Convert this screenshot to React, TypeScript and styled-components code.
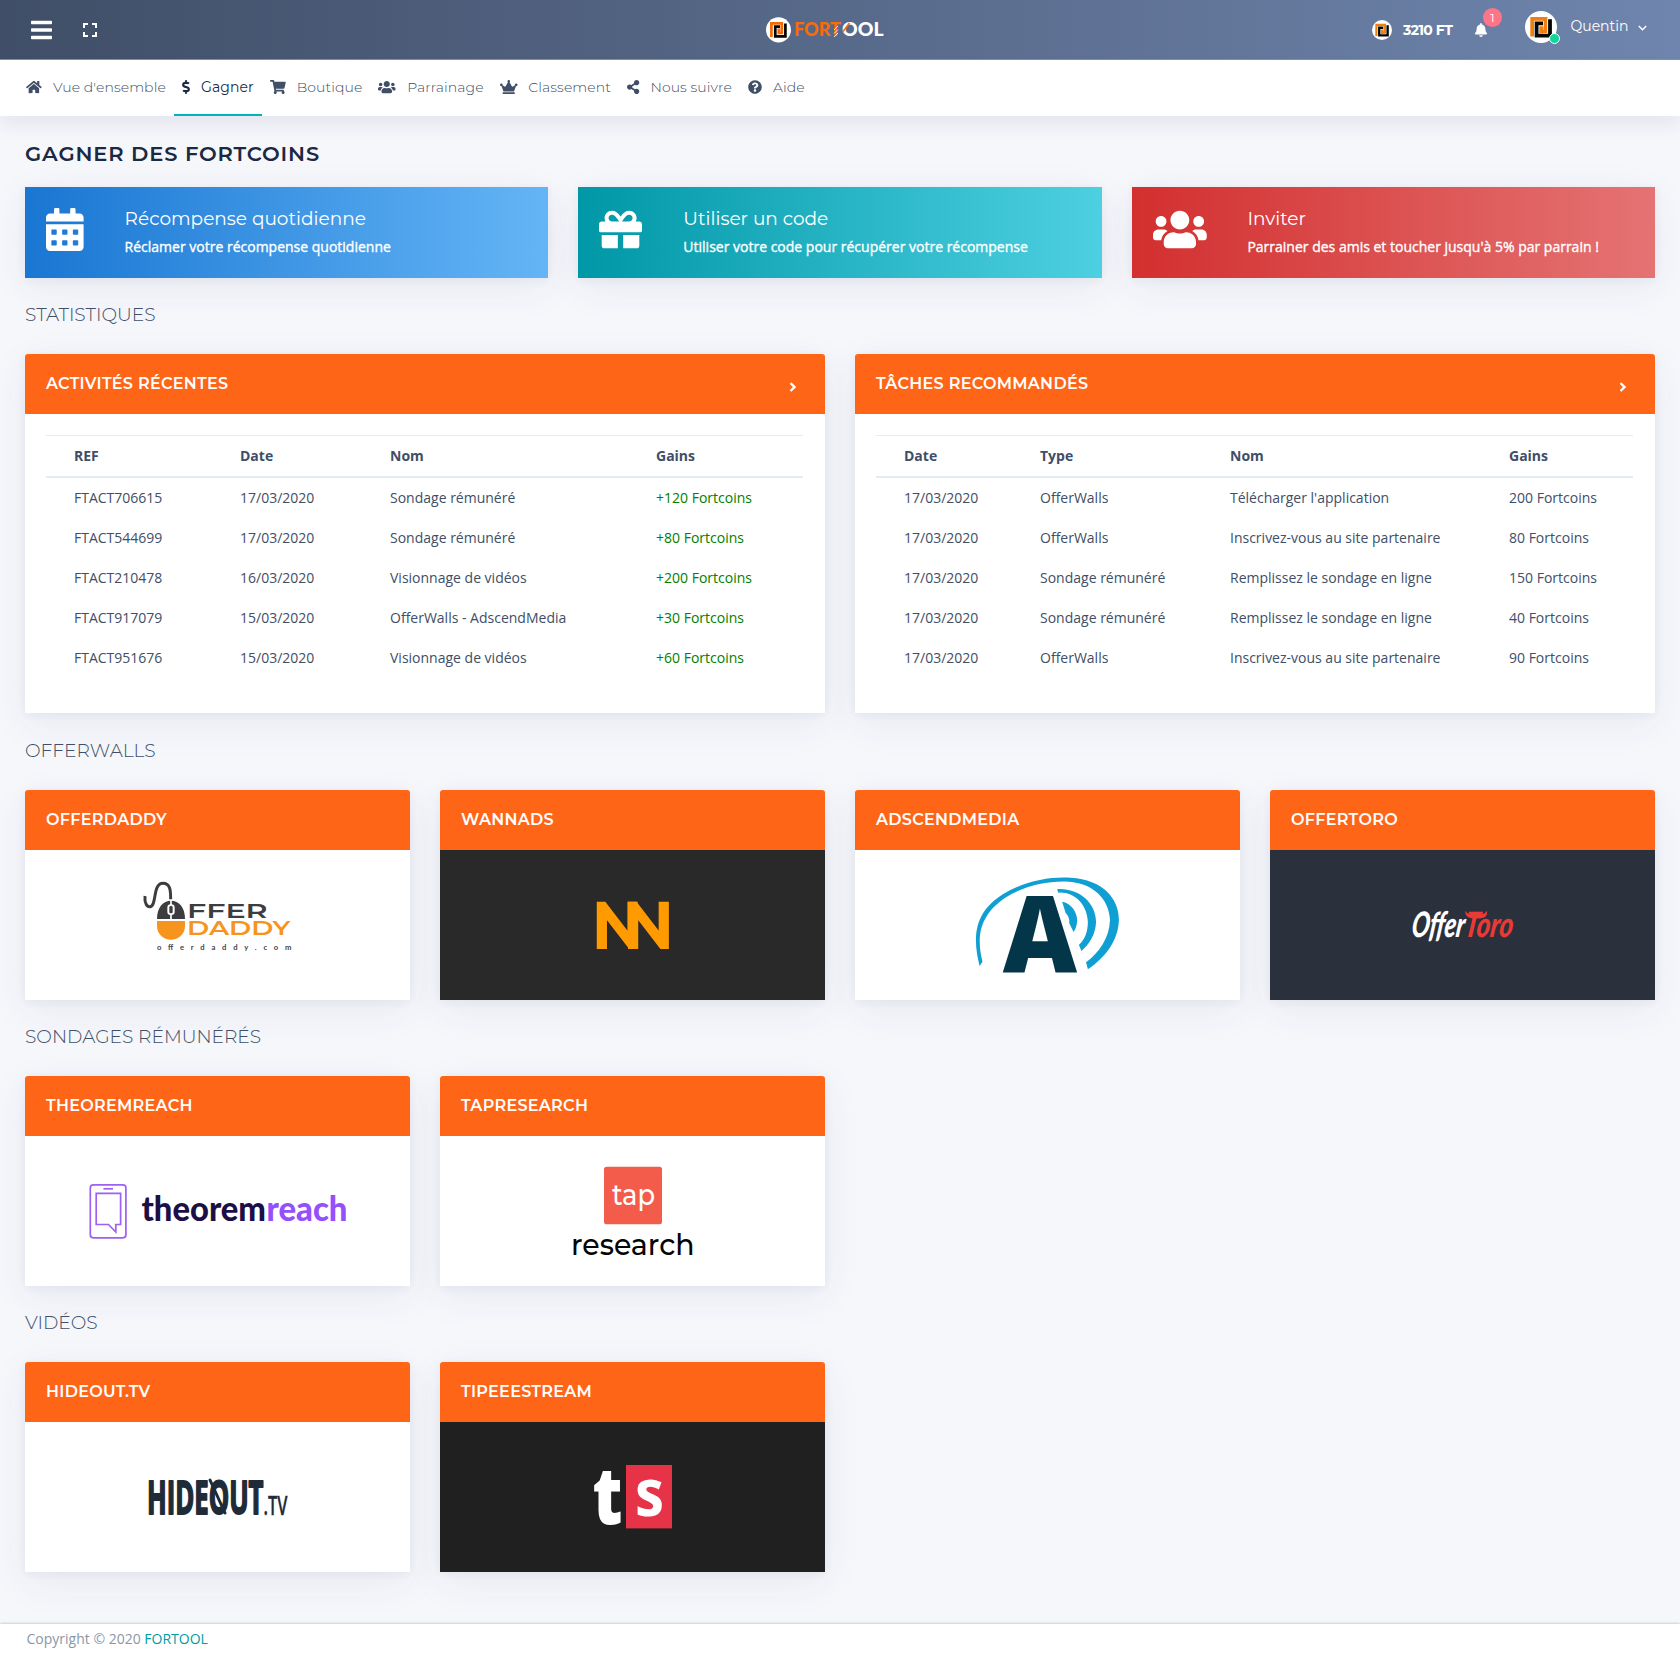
import React from "react";
import styled, { createGlobalStyle } from "styled-components";
import {
  FaBars, FaHome, FaDollarSign, FaShoppingCart, FaUsers, FaCrown, FaShareAlt,
  FaQuestionCircle, FaCalendarAlt, FaGift, FaBell,
} from "react-icons/fa";
import { MdFullscreen } from "react-icons/md";

const display = `Montserrat, Inter, "Open Sans", sans-serif`;
const body = `"Open Sans", "Noto Sans", sans-serif`;

const GlobalStyle = createGlobalStyle`
  *, *::before, *::after { box-sizing: border-box; }
  body { margin: 0; background: #f5f7fb; color: #404e67; font: 400 14px/20px ${body}; }
  h1, h2, h3, p { margin: 0; }
  svg { display: block; overflow: visible; }
`;

const Page = styled.div`
  display: flex;
  flex-direction: column;
  min-height: 1655px;
`;

const Glyph = styled.span<{ $w: number; $h: number }>`
  flex: none;
  svg {
    width: ${(p) => p.$w}px;
    height: ${(p) => p.$h}px;
  }
`;

/* ---- Header ---- */
const Header = styled.header`
  display: flex;
  align-items: center;
  height: 60px;
  padding: 0 33px 0 31px;
  background: linear-gradient(to right, #404e67, #6f85ad);
  border-bottom: 1px solid #7d90b4;
  color: #fff;
`;
const HeaderTools = styled.div`
  display: flex;
  align-items: center;
  gap: 26px;
  flex: 0 0 734px;
`;
const HeaderRight = styled.div`
  display: flex;
  align-items: center;
  margin-left: auto;
  font-family: ${display};
`;
const Balance = styled.span`
  width: 52px;
  margin: 0 19px 0 11px;
  font-weight: 700;
  letter-spacing: -0.55px;
  white-space: nowrap;
`;
const BellWrap = styled.div`
  position: relative;
  margin-right: 37px;
`;
const Badge = styled.span`
  position: absolute;
  left: 9px;
  top: -15px;
  width: 19px;
  height: 19px;
  border-radius: 50%;
  background: #ff7588;
  font-size: 12px;
  line-height: 19px;
  text-align: center;
`;
const Avatar = styled.div`
  position: relative;
  margin: -5px 13.5px 0 0;
`;
const OnlineDot = styled.i`
  position: absolute;
  right: -3px;
  bottom: -1px;
  width: 11px;
  height: 11px;
  border: 1px solid #fff;
  border-radius: 50%;
  background: #16d39a;
`;
const UserName = styled.span`
  margin: -8px 10.5px 0 0;
  width: 57px;
`;
const Caret = styled.svg`
  margin-top: -4px;
`;

/* ---- Navigation ---- */
const Nav = styled.nav`
  display: flex;
  height: 56px;
  padding-left: 18px;
  background: #fff;
  box-shadow: 0 10px 18px rgba(62, 57, 107, 0.08);
`;
const NavItem = styled.a<{ $active?: boolean }>`
  display: flex;
  align-items: center;
  gap: 11.2px;
  padding: 0 8px;
  font-family: ${display};
  font-weight: ${(p) => (p.$active ? 400 : 300)};
  letter-spacing: 0.09px;
  color: ${(p) => (p.$active ? "#1b2942" : "#404e67")};
  border-bottom: 2px solid ${(p) => (p.$active ? "#00b5b8" : "transparent")};
`;

/* ---- Content ---- */
const Main = styled.main`
  flex: 1;
  padding: 24px 25px 0;
`;
const PageTitle = styled.h1`
  height: 47px;
  font: 600 21px/28px ${display};
  letter-spacing: 0.85px;
  color: #1b2942;
`;
const shadow = `0 10px 40px 0 rgba(62, 57, 107, 0.07), 0 2px 9px 0 rgba(62, 57, 107, 0.06)`;
const Banners = styled.div`
  display: grid;
  grid-template-columns: repeat(3, 1fr);
  gap: 30px;
  margin-bottom: 26px;
`;
const Banner = styled.a<{ $from: string; $to: string }>`
  display: flex;
  align-items: center;
  gap: 41px;
  height: 91px;
  padding: 0 21px 6px;
  color: #fff;
  background: linear-gradient(to right, ${(p) => p.$from}, ${(p) => p.$to});
  box-shadow: ${shadow};
`;
const BannerText = styled.div`
  padding-top: 6px;
`;
const BannerTitle = styled.h3`
  margin-bottom: 7px;
  font: 400 18.5px/22px ${display};
`;
const BannerSub = styled.p`
  font-weight: 400;
  -webkit-text-stroke: 0.35px #fff;
`;

const SectionTitle = styled.h2`
  height: 22px;
  margin-bottom: 28px;
  font: 300 18.6px/22px ${display};
`;
const Grid = styled.div<{ $cols: number }>`
  display: grid;
  grid-template-columns: repeat(${(p) => p.$cols}, 1fr);
  gap: 30px;
  margin-bottom: 26px;
`;
const TableGrid = styled(Grid)`
  margin-bottom: 27px;
`;
const Card = styled.section`
  display: flex;
  flex-direction: column;
  border-radius: 3px 3px 0 0;
  background: #fff;
  box-shadow: ${shadow};
`;
const CardHeader = styled.header`
  display: flex;
  align-items: center;
  justify-content: space-between;
  height: 60px;
  padding: 0 28.5px 1px 21px;
  border-radius: 3px 3px 0 0;
  background: #ff6517;
  color: #fff;
`;
const CardTitle = styled.h3`
  font: 600 16px/20px ${display};
  letter-spacing: 0.3px;
`;
const More = styled.svg`
  margin-top: 7px;
`;
const TableBody = styled.div`
  padding: 21px 22px 35px 21px;
`;
const Table = styled.div`
  border-top: 1px solid #e3ebf3;
`;
const Row = styled.div<{ $cols: string; $head?: boolean }>`
  display: grid;
  grid-template-columns: ${(p) => p.$cols};
  align-items: center;
  height: ${(p) => (p.$head ? 42 : 40)}px;
  border-bottom: ${(p) => (p.$head ? "2px solid #e3ebf3" : "0")};
  font-weight: ${(p) => (p.$head ? 700 : 400)};
`;
const Cell = styled.span<{ $gain?: boolean }>`
  padding-left: 28px;
  white-space: nowrap;
  color: ${(p) => (p.$gain ? "green" : "inherit")};
`;
const LogoBox = styled.div<{ $bg: string }>`
  height: 150px;
  background: ${(p) => p.$bg};
`;
const Footer = styled.footer`
  height: 31px;
  padding: 5px 26.5px;
  background: #fff;
  box-shadow: 0 0 3px rgba(0, 0, 0, 0.3);
  color: #8b97a8;
  a { color: #009c9f; }
`;

/* ---- Brand drawings ---- */
const Coin = ({ size }: { size: number }) => (
  <svg width={size} height={size} viewBox="0 0 32 32" fill="none">
    <circle cx="16" cy="16" r="16" fill="#fff" />
    <path d="M7.200 25.500V8H20.500V20.700H16.300V15.500" stroke="#ef8010" strokeWidth="3.800" />
    <path d="M18.200 12.300H11.600V24.600H25V8" stroke="#fff" strokeWidth="5" />
    <path d="M18 12.300H11.600V24.600H25V8.300" stroke="#050505" strokeWidth="3.800" />
    <path d="M16.300 22.600V15.500" stroke="#ef8010" strokeWidth="3.400" />
  </svg>
);

const svgText = { lengthAdjust: "spacingAndGlyphs" as const };

const BrandLogo = () => (
  <svg width="120" height="26" viewBox="0 0 120 26">
    <ellipse cx="13.5" cy="12.8" rx="12.5" ry="12.6" fill="#fff" />
    <g fill="none" strokeWidth="2.7">
      <path d="M6.4 20V6.4H16.8V16H13.8V11.5" stroke="#f56a06" />
      <path d="M15 9.6H10.3V19.3H20.4V6.5" stroke="#050505" />
    </g>
    <g fontFamily="Lato, sans-serif" fontWeight="900" fontSize="18.4">
      <text x="29" y="19" fill="#f96b07" textLength="47" {...svgText}>FORT</text>
      <text x="77" y="19" fill="#fff" textLength="41.5" {...svgText}>OOL</text>
    </g>
    <path d="M69 13l4-4M69 16.500l4-4M69 20l4-4" stroke="#fff" strokeWidth="0.9" />
    <path d="M84.500 6l-6.500 8.500" stroke="#f96b07" strokeWidth="1.600" />
  </svg>
);

const OfferDaddy = () => (
  <svg width="385" height="150">
    <g transform="translate(110 20) scale(.33333)">
      <path d="M30 78C28 100 36 112 46 110C66 106 52 40 84 40C106 40 107 62 107 88" fill="none" stroke="#3d3d3f" strokeWidth="9" />
      <path d="M66 147C66 112 84 92 108 92C132 92 150 112 150 147Z" fill="#3d3d3f" />
      <path d="M108 90V148" stroke="#fff" strokeWidth="5" />
      <rect x="97" y="103" width="22" height="32" rx="10" fill="#fff" />
      <rect x="103" y="108" width="10" height="22" rx="4" fill="#3d3d3f" />
      <path d="M66 153H150V168C150 193 130 209 108 209C86 209 66 193 66 168Z" fill="#f7941d" />
      <g fontFamily="Montserrat, sans-serif" fontWeight="600" fontSize="60">
        <text x="156" y="143" fill="#3d3d3f" textLength="242" {...svgText}>FFER</text>
        <text x="156" y="196" fill="#f7941d" textLength="310" {...svgText}>DADDY</text>
      </g>
      <text x="66" y="241" fill="#444" fontFamily="Lato, sans-serif" fontWeight="700" fontSize="23" textLength="403">offerdaddy.com</text>
    </g>
  </svg>
);

const Wannads = () => (
  <svg width="385" height="150">
    <text transform="translate(151.600 98.500) scale(.95 1)" fill="#ff9a00" fontFamily="Montserrat, sans-serif" fontWeight="700" fontSize="67" letterSpacing="-21.300">NN</text>
  </svg>
);

const AdscendMedia = () => (
  <svg width="385" height="150">
    <g transform="translate(105 15) scale(.35714 .33333)" fill="#109fd3">
      <path d="M55 303C30 200 50 135 120 88C180 48 250 34 310 38C400 44 445 100 445 165C443 225 410 275 358 313L353 292C390 262 418 220 420 165C418 100 370 54 305 50C250 46 180 62 130 96C70 138 40 195 63 290Z" />
      <path d="M272 72C330 68 381 110 381 172C379 210 362 238 340 258L333 240C350 222 358 200 358 170C356 120 322 80 275 83Z" />
      <path d="M286 110C310 114 328 140 328 165C328 180 324 192 318 201L306 175C308 160 300 148 296 145Z" />
    </g>
    <text x="147.8" y="122" fill="#033649" fontFamily="Open Sans, sans-serif" fontWeight="800" fontSize="106" textLength="74.4" {...svgText}>A</text>
  </svg>
);

const OfferToro = () => (
  <svg width="385" height="150">
    <g fontFamily="Lato, sans-serif" fontStyle="italic" fontWeight="900" fontSize="35">
      <text transform="translate(140.500 86.500) skewX(-8)" fill="#fff" textLength="53" {...svgText}>Offer</text>
      <text transform="translate(193.500 86.500) skewX(-8)" fill="#e93a35" textLength="48.500" {...svgText}>Toro</text>
    </g>
    <path d="M195.500 60.500C197 64.500 200 64.500 206 64.500C212 64.500 215 64.500 217 60.500C218 67 214 68.500 206 68.500C198 68.500 194.500 66 195.500 60.500Z" fill="#e93a35" />
  </svg>
);

const TheoremReach = () => (
  <svg width="385" height="150">
    <g fill="none" stroke="#9c60f3" strokeWidth="1.7">
      <rect x="65.300" y="48.800" width="35.600" height="53" rx="3" />
      <path d="M71.200 57.300H95.600V88.500H90.800V96L83.500 88.500H71.200Z" />
      <path d="M78.400 52.800H88" />
    </g>
    <g fontFamily="Lato, sans-serif" fontWeight="900" fontSize="34">
      <text x="116.500" y="84.700" fill="#1c0f45" textLength="124.500" {...svgText}>theorem</text>
      <text x="241.500" y="84.700" fill="#9350fb" textLength="81" {...svgText}>reach</text>
    </g>
  </svg>
);

const TapResearch = () => (
  <svg width="385" height="150">
    <rect x="164" y="30.700" width="58" height="57.500" rx="2.500" fill="#f35b4a" />
    <g fontFamily="Montserrat, sans-serif" fontWeight="500" fontSize="30">
      <text x="172" y="68.500" fill="#fff" textLength="43" {...svgText}>tap</text>
      <text x="131" y="118.500" fill="#050505" textLength="123.500" {...svgText}>research</text>
    </g>
  </svg>
);

const Hideout = () => (
  <svg width="385" height="150">
    <g fill="#1f2b36" stroke="#1f2b36" strokeLinejoin="round" strokeLinecap="round">
      <text x="122" y="91.500" fontFamily="Open Sans, sans-serif" fontWeight="700" fontSize="46" strokeWidth="2" textLength="116.500" {...svgText}>HIDEOUT</text>
      <path d="M185 58L200 91" strokeWidth="3" />
      <text x="238.500" y="92.500" fontFamily="Open Sans, sans-serif" fontWeight="600" fontSize="27" strokeWidth=".3" textLength="24" {...svgText}>.TV</text>
    </g>
  </svg>
);

const TipeeeStream = () => (
  <svg width="385" height="150">
    <rect x="186" y="43" width="46" height="63.400" fill="#e63348" />
    <g fill="#fff" fontFamily="Open Sans, sans-serif" fontWeight="800">
      <text x="152.500" y="101.500" fontSize="80" textLength="30" {...svgText}>t</text>
      <text x="195" y="93.500" fontSize="66" fontWeight="700" textLength="29" {...svgText}>s</text>
    </g>
  </svg>
);

/* ---- Data ---- */
const nav = [
  { label: "Vue d'ensemble", Icon: FaHome, w: 15.75 },
  { label: "Gagner", Icon: FaDollarSign, w: 8, active: true },
  { label: "Boutique", Icon: FaShoppingCart, w: 15.75 },
  { label: "Parrainage", Icon: FaUsers, w: 17.5 },
  { label: "Classement", Icon: FaCrown, w: 17.5 },
  { label: "Nous suivre", Icon: FaShareAlt, w: 12.25 },
  { label: "Aide", Icon: FaQuestionCircle, w: 14 },
];

const banners = [
  { title: "Récompense quotidienne", sub: "Réclamer votre récompense quotidienne", Icon: FaCalendarAlt, w: 37.6, from: "#1976d2", to: "#64b5f6" },
  { title: "Utiliser un code", sub: "Utiliser votre code pour récupérer votre récompense", Icon: FaGift, w: 43, from: "#0097a7", to: "#4dd0e1" },
  { title: "Inviter", sub: "Parrainer des amis et toucher jusqu'à 5% par parrain !", Icon: FaUsers, w: 53.75, from: "#d32f2f", to: "#e57373" },
];

const activities = {
  title: "ACTIVITÉS RÉCENTES",
  cols: "166px 150px 266px 1fr",
  head: ["REF", "Date", "Nom", "Gains"],
  rows: [
    ["FTACT706615", "17/03/2020", "Sondage rémunéré", "+120 Fortcoins"],
    ["FTACT544699", "17/03/2020", "Sondage rémunéré", "+80 Fortcoins"],
    ["FTACT210478", "16/03/2020", "Visionnage de vidéos", "+200 Fortcoins"],
    ["FTACT917079", "15/03/2020", "OfferWalls - AdscendMedia", "+30 Fortcoins"],
    ["FTACT951676", "15/03/2020", "Visionnage de vidéos", "+60 Fortcoins"],
  ],
};

const tasks = {
  title: "TÂCHES RECOMMANDÉS",
  cols: "136px 190px 279px 1fr",
  head: ["Date", "Type", "Nom", "Gains"],
  rows: [
    ["17/03/2020", "OfferWalls", "Télécharger l'application", "200 Fortcoins"],
    ["17/03/2020", "OfferWalls", "Inscrivez-vous au site partenaire", "80 Fortcoins"],
    ["17/03/2020", "Sondage rémunéré", "Remplissez le sondage en ligne", "150 Fortcoins"],
    ["17/03/2020", "Sondage rémunéré", "Remplissez le sondage en ligne", "40 Fortcoins"],
    ["17/03/2020", "OfferWalls", "Inscrivez-vous au site partenaire", "90 Fortcoins"],
  ],
};

const partnerSections = [
  {
    title: "OFFERWALLS",
    items: [
      { name: "OFFERDADDY", bg: "#fff", Logo: OfferDaddy },
      { name: "WANNADS", bg: "#292929", Logo: Wannads },
      { name: "ADSCENDMEDIA", bg: "#fff", Logo: AdscendMedia },
      { name: "OFFERTORO", bg: "#2a303c", Logo: OfferToro },
    ],
  },
  {
    title: "SONDAGES RÉMUNÉRÉS",
    items: [
      { name: "THEOREMREACH", bg: "#fff", Logo: TheoremReach },
      { name: "TAPRESEARCH", bg: "#fff", Logo: TapResearch },
    ],
  },
  {
    title: "VIDÉOS",
    items: [
      { name: "HIDEOUT.TV", bg: "#fff", Logo: Hideout },
      { name: "TIPEEESTREAM", bg: "#202020", Logo: TipeeeStream },
    ],
  },
];

type TableData = typeof activities;

const TableCard = ({ data, gains }: { data: TableData; gains?: boolean }) => (
  <Card>
    <CardHeader>
      <CardTitle>{data.title}</CardTitle>
      <More width="8" height="10" viewBox="0 0 8 10" fill="none" stroke="#fff" strokeWidth="2.4">
        <path d="M1.500 1L5.500 5L1.500 9" />
      </More>
    </CardHeader>
    <TableBody>
      <Table>
        <Row $cols={data.cols} $head>
          {data.head.map((h) => <Cell key={h}>{h}</Cell>)}
        </Row>
        {data.rows.map((r, i) => (
          <Row key={i} $cols={data.cols}>
            {r.map((c, j) => <Cell key={j} $gain={gains && j === 3}>{c}</Cell>)}
          </Row>
        ))}
      </Table>
    </TableBody>
  </Card>
);

export default function App() {
  return (
    <Page>
      <GlobalStyle />
      <Header>
        <HeaderTools>
          <Glyph $w={21} $h={24}><FaBars /></Glyph>
          <Glyph $w={24} $h={24}><MdFullscreen /></Glyph>
        </HeaderTools>
        <BrandLogo />
        <HeaderRight>
          <Coin size={20} />
          <Balance>3210 FT</Balance>
          <BellWrap>
            <FaBell size={14} />
            <Badge>1</Badge>
          </BellWrap>
          <Avatar>
            <Coin size={32} />
            <OnlineDot />
          </Avatar>
          <UserName>Quentin</UserName>
          <Caret width="9" height="6" viewBox="0 0 9 6" fill="none" stroke="#fff" strokeWidth="1.5">
            <path d="M.8 1L4.500 4.700L8.200 1" />
          </Caret>
        </HeaderRight>
      </Header>
      <Nav>
        {nav.map(({ label, Icon, w, active }) => (
          <NavItem key={label} $active={active}>
            <Glyph $w={w} $h={14}><Icon /></Glyph>
            {label}
          </NavItem>
        ))}
      </Nav>
      <Main>
        <PageTitle>GAGNER DES FORTCOINS</PageTitle>
        <Banners>
          {banners.map(({ title, sub, Icon, w, from, to }) => (
            <Banner key={title} $from={from} $to={to}>
              <Glyph $w={w} $h={43}><Icon /></Glyph>
              <BannerText>
                <BannerTitle>{title}</BannerTitle>
                <BannerSub>{sub}</BannerSub>
              </BannerText>
            </Banner>
          ))}
        </Banners>
        <SectionTitle>STATISTIQUES</SectionTitle>
        <TableGrid $cols={2}>
          <TableCard data={activities} gains />
          <TableCard data={tasks} />
        </TableGrid>
        {partnerSections.map(({ title, items }) => (
          <React.Fragment key={title}>
            <SectionTitle>{title}</SectionTitle>
            <Grid $cols={4}>
              {items.map(({ name, bg, Logo }) => (
                <Card key={name}>
                  <CardHeader>
                    <CardTitle>{name}</CardTitle>
                  </CardHeader>
                  <LogoBox $bg={bg}>
                    <Logo />
                  </LogoBox>
                </Card>
              ))}
            </Grid>
          </React.Fragment>
        ))}
      </Main>
      <Footer>
        Copyright © 2020 <a>FORTOOL</a>
      </Footer>
    </Page>
  );
}
